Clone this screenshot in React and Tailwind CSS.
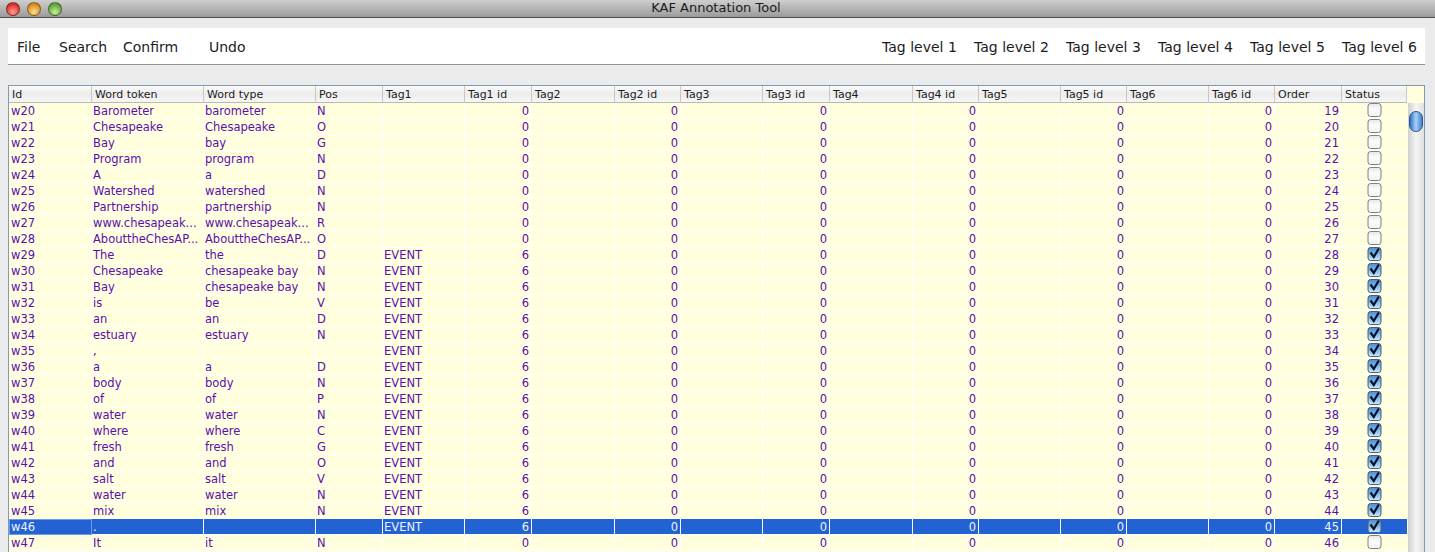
const columns = [
  { name: 'Id', width: 'w-[83px]' },
  { name: 'Word token', width: 'w-[112px]' },
  { name: 'Word type', width: 'w-[112px]' },
  { name: 'Pos', width: 'w-[67px]' },
  { name: 'Tag1', width: 'w-[82px]' },
  { name: 'Tag1 id', width: 'w-[67px]' },
  { name: 'Tag2', width: 'w-[83px]' },
  { name: 'Tag2 id', width: 'w-[66px]' },
  { name: 'Tag3', width: 'w-[82px]' },
  { name: 'Tag3 id', width: 'w-[67px]' },
  { name: 'Tag4', width: 'w-[83px]' },
  { name: 'Tag4 id', width: 'w-[66px]' },
  { name: 'Tag5', width: 'w-[82px]' },
  { name: 'Tag5 id', width: 'w-[66px]' },
  { name: 'Tag6', width: 'w-[82px]' },
  { name: 'Tag6 id', width: 'w-[66px]' },
  { name: 'Order', width: 'w-[67px]' },
  { name: 'Status', width: 'w-[65px]' },
];

const rows = [
  ['w20', 'Barometer', 'barometer', 'N', ''],
  ['w21', 'Chesapeake', 'Chesapeake', 'O', ''],
  ['w22', 'Bay', 'bay', 'G', ''],
  ['w23', 'Program', 'program', 'N', ''],
  ['w24', 'A', 'a', 'D', ''],
  ['w25', 'Watershed', 'watershed', 'N', ''],
  ['w26', 'Partnership', 'partnership', 'N', ''],
  ['w27', 'www.chesapeak...', 'www.chesapeak...', 'R', ''],
  ['w28', 'AbouttheChesAP...', 'AbouttheChesAP...', 'O', ''],
  ['w29', 'The', 'the', 'D', 'EVENT'],
  ['w30', 'Chesapeake', 'chesapeake bay', 'N', 'EVENT'],
  ['w31', 'Bay', 'chesapeake bay', 'N', 'EVENT'],
  ['w32', 'is', 'be', 'V', 'EVENT'],
  ['w33', 'an', 'an', 'D', 'EVENT'],
  ['w34', 'estuary', 'estuary', 'N', 'EVENT'],
  ['w35', ',', '', '', 'EVENT'],
  ['w36', 'a', 'a', 'D', 'EVENT'],
  ['w37', 'body', 'body', 'N', 'EVENT'],
  ['w38', 'of', 'of', 'P', 'EVENT'],
  ['w39', 'water', 'water', 'N', 'EVENT'],
  ['w40', 'where', 'where', 'C', 'EVENT'],
  ['w41', 'fresh', 'fresh', 'G', 'EVENT'],
  ['w42', 'and', 'and', 'O', 'EVENT'],
  ['w43', 'salt', 'salt', 'V', 'EVENT'],
  ['w44', 'water', 'water', 'N', 'EVENT'],
  ['w45', 'mix', 'mix', 'N', 'EVENT'],
  ['w46', '.', '', '', 'EVENT'],
  ['w47', 'It', 'it', 'N', ''],
];

const fontStack = 'font-["DejaVu_Sans",sans-serif]';

function Checkbox({ checked }) {
  return (
    <svg width="15" height="15" viewBox="0 0 15 15" className="block">
      <defs>
        <linearGradient id="box-off" x1="0" y1="0" x2="0" y2="1">
          <stop offset="0" stopColor="#e8e8e8" />
          <stop offset="0.5" stopColor="#fbfbfb" />
          <stop offset="1" stopColor="#f0f0f0" />
        </linearGradient>
        <linearGradient id="box-on" x1="0" y1="0" x2="0" y2="1">
          <stop offset="0" stopColor="#4f8ad2" />
          <stop offset="0.5" stopColor="#7db4ea" />
          <stop offset="1" stopColor="#cfeaff" />
        </linearGradient>
      </defs>
      <rect x="1" y="0.5" width="13" height="13" rx="2.5" fill={checked ? 'url(#box-on)' : 'url(#box-off)'} stroke={checked ? '#4d5f73' : '#7f7f7f'} />
      {checked && <path d="M3.5 5.5 L6.8 10 L11.8 1.5" fill="none" stroke="#0a1420" strokeWidth="2.2" />}
    </svg>
  );
}

function Row({ row, index }) {
  const selected = row[0] === 'w46';
  const tagged = row[4] === 'EVENT';
  const order = 19 + index;
  const values = [row[0], row[1], row[2], row[3], row[4], tagged ? '6' : '0', '', '0', '', '0', '', '0', '', '0', '', '0', String(order)];
  const tone = selected ? 'bg-[#2262d3] text-[#eef3fc]' : 'bg-[#ffffdd] text-[#5a0fb0]';

  return (
    <div className="flex h-4">
      {values.map((value, i) => {
        const numeric = i >= 5 && i % 2 === 1;
        const isOrder = i === 16;
        const focused = selected && i === 0;
        return (
          <div
            key={i}
            className={`${columns[i].width} ${tone} shrink-0 border-r border-b border-white ${i === 0 ? 'pl-[2px]' : 'pl-px'} pr-[2px] pt-px text-[11.5px] leading-[15px] whitespace-nowrap overflow-hidden ${numeric || isOrder ? 'text-right' : 'text-left'} ${focused ? 'outline outline-[#6d9be6] -outline-offset-1' : ''}`}
          >
            {value}
          </div>
        );
      })}
      <div className={`${columns[17].width} ${tone} shrink-0 border-b border-white flex justify-center pr-px`}>
        <Checkbox checked={tagged} />
      </div>
    </div>
  );
}

function WindowDot({ color }) {
  return <span className={`w-[14px] h-[14px] rounded-full border border-black/40 ${color}`} />;
}

export default function App() {
  return (
    <div className={`w-[1435px] h-[552px] overflow-hidden bg-[#ebebeb] flex flex-col ${fontStack}`}>
      <div className="relative h-[18px] shrink-0 flex items-center gap-[7px] pl-[6px] bg-gradient-to-b from-[#cfcfcf] to-[#9b9b9b] border-b border-[#4f4f4f]">
        <WindowDot color="bg-[radial-gradient(circle_at_50%_75%,#ff9c94,#d8322c_70%)]" />
        <WindowDot color="bg-[radial-gradient(circle_at_50%_75%,#ffdf90,#d98a1e_70%)]" />
        <WindowDot color="bg-[radial-gradient(circle_at_50%_75%,#c8f0a0,#5da438_70%)]" />
        <span className="absolute inset-x-0 top-0 pr-[3px] text-center text-[13px] leading-[15px] text-[#1a1a1a]">KAF Annotation Tool</span>
      </div>

      <div className="mt-[10px] ml-2 mr-[10px] h-[37px] shrink-0 bg-white border-b border-[#8e9396] flex items-center justify-between text-[14px] text-[#1c1c1c] pt-[2px]">
        <div className="flex pl-[9px]">
          <span className="w-[42px]">File</span>
          <span className="w-[64px]">Search</span>
          <span className="w-[86px]">Confirm</span>
          <span>Undo</span>
        </div>
        <div className="flex gap-[18px] pr-[9px]">
          {[1, 2, 3, 4, 5, 6].map((n) => (
            <span key={n} className="w-[74px] whitespace-nowrap">Tag level {n}</span>
          ))}
        </div>
      </div>

      <div className="mt-[20px] ml-2 w-[1417px] flex-1 min-h-0 border-l border-t border-r border-[#7d9cb4] bg-[#ffffdd] flex">
        <div className="w-[1399px] shrink-0">
          <div className="flex h-[17px]">
            {columns.map((col) => (
              <div key={col.name} className={`${col.width} shrink-0 border-r border-b border-r-[#c8c8c8] border-b-[#b9b9b9] bg-gradient-to-b from-[#fafafa] via-[#ececec] to-[#f7f7f7] pl-[3px] pt-px text-[11px] leading-[16px] text-[#1c1c1c] whitespace-nowrap`}>
                {col.name}
              </div>
            ))}
          </div>
          {rows.map((row, i) => (
            <Row key={row[0]} row={row} index={i} />
          ))}
        </div>
        <div className="flex-1 flex flex-col">
          <div className="h-[17px] shrink-0 bg-[#ffffdd]" />
          <div className="flex-1 bg-gradient-to-r from-[#cfcfcf] via-[#f5f5f5] to-[#e0e0e0] pt-2">
            <div className="w-[14px] h-[21px] ml-px rounded-[7px] border border-[#28578f] bg-gradient-to-r from-[#2f6fc4] via-[#a9d0f5] to-[#3f7fd0]" />
          </div>
        </div>
      </div>
    </div>
  );
}
